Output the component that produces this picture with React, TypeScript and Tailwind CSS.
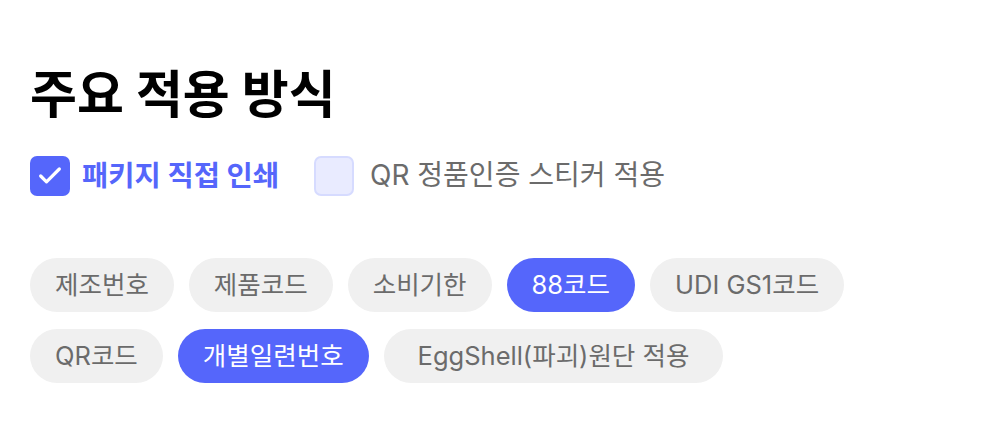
import { Check } from 'lucide-react'

const chipRows = [
  [
    { label: '제조번호', active: false },
    { label: '제품코드', active: false },
    { label: '소비기한', active: false },
    { label: '88코드', active: true },
    { label: 'UDI GS1코드', active: false },
  ],
  [
    { label: 'QR코드', active: false },
    { label: '개별일련번호', active: true },
    { label: 'EggShell(파괴)원단 적용', active: false, wide: true },
  ],
]

function Chip({ label, active, wide }: { label: string; active: boolean; wide?: boolean }) {
  return (
    <div
      className={
        'h-[54px] flex items-center rounded-full text-[25.5px] ' +
        (wide ? 'px-[34px] ' : 'px-[25px] ') +
        (active ? 'bg-[#5566fb] text-white' : 'bg-[#f0f0f0] text-[#6b6b6b]')
      }
    >
      {label}
    </div>
  )
}

export default function App() {
  return (
    <div
      className="w-[984px] h-[444px] bg-white px-[30px] pt-[62px]"
      style={{ fontFamily: 'Inter, "Noto Sans CJK KR", sans-serif' }}
    >
      <h1 className="text-[51px] font-bold leading-[66px] text-black">주요 적용 방식</h1>

      <div className="mt-[27px] flex items-center leading-[41px]">
        <div className="flex items-center gap-3">
          <div className="w-10 h-10 rounded-[7px] bg-[#5566fb] flex items-center justify-center">
            <Check className="w-7 h-7 text-white" strokeWidth={2.75} />
          </div>
          <span className="text-[28.5px] font-bold text-[#5566fb]">패키지 직접 인쇄</span>
        </div>
        <div className="ml-[35px] flex items-center gap-4">
          <div className="w-10 h-10 rounded-[7px] bg-[#e9ebff] border-2 border-[#d6dbff]" />
          <span className="text-[28px] text-[#6b6b6b]">QR 정품인증 스티커 적용</span>
        </div>
      </div>

      <div className="mt-[62px] flex flex-col gap-[17px]">
        {chipRows.map((row, i) => (
          <div key={i} className="flex gap-[15px]">
            {row.map((c) => (
              <Chip key={c.label} label={c.label} active={c.active} wide={c.wide} />
            ))}
          </div>
        ))}
      </div>
    </div>
  )
}
